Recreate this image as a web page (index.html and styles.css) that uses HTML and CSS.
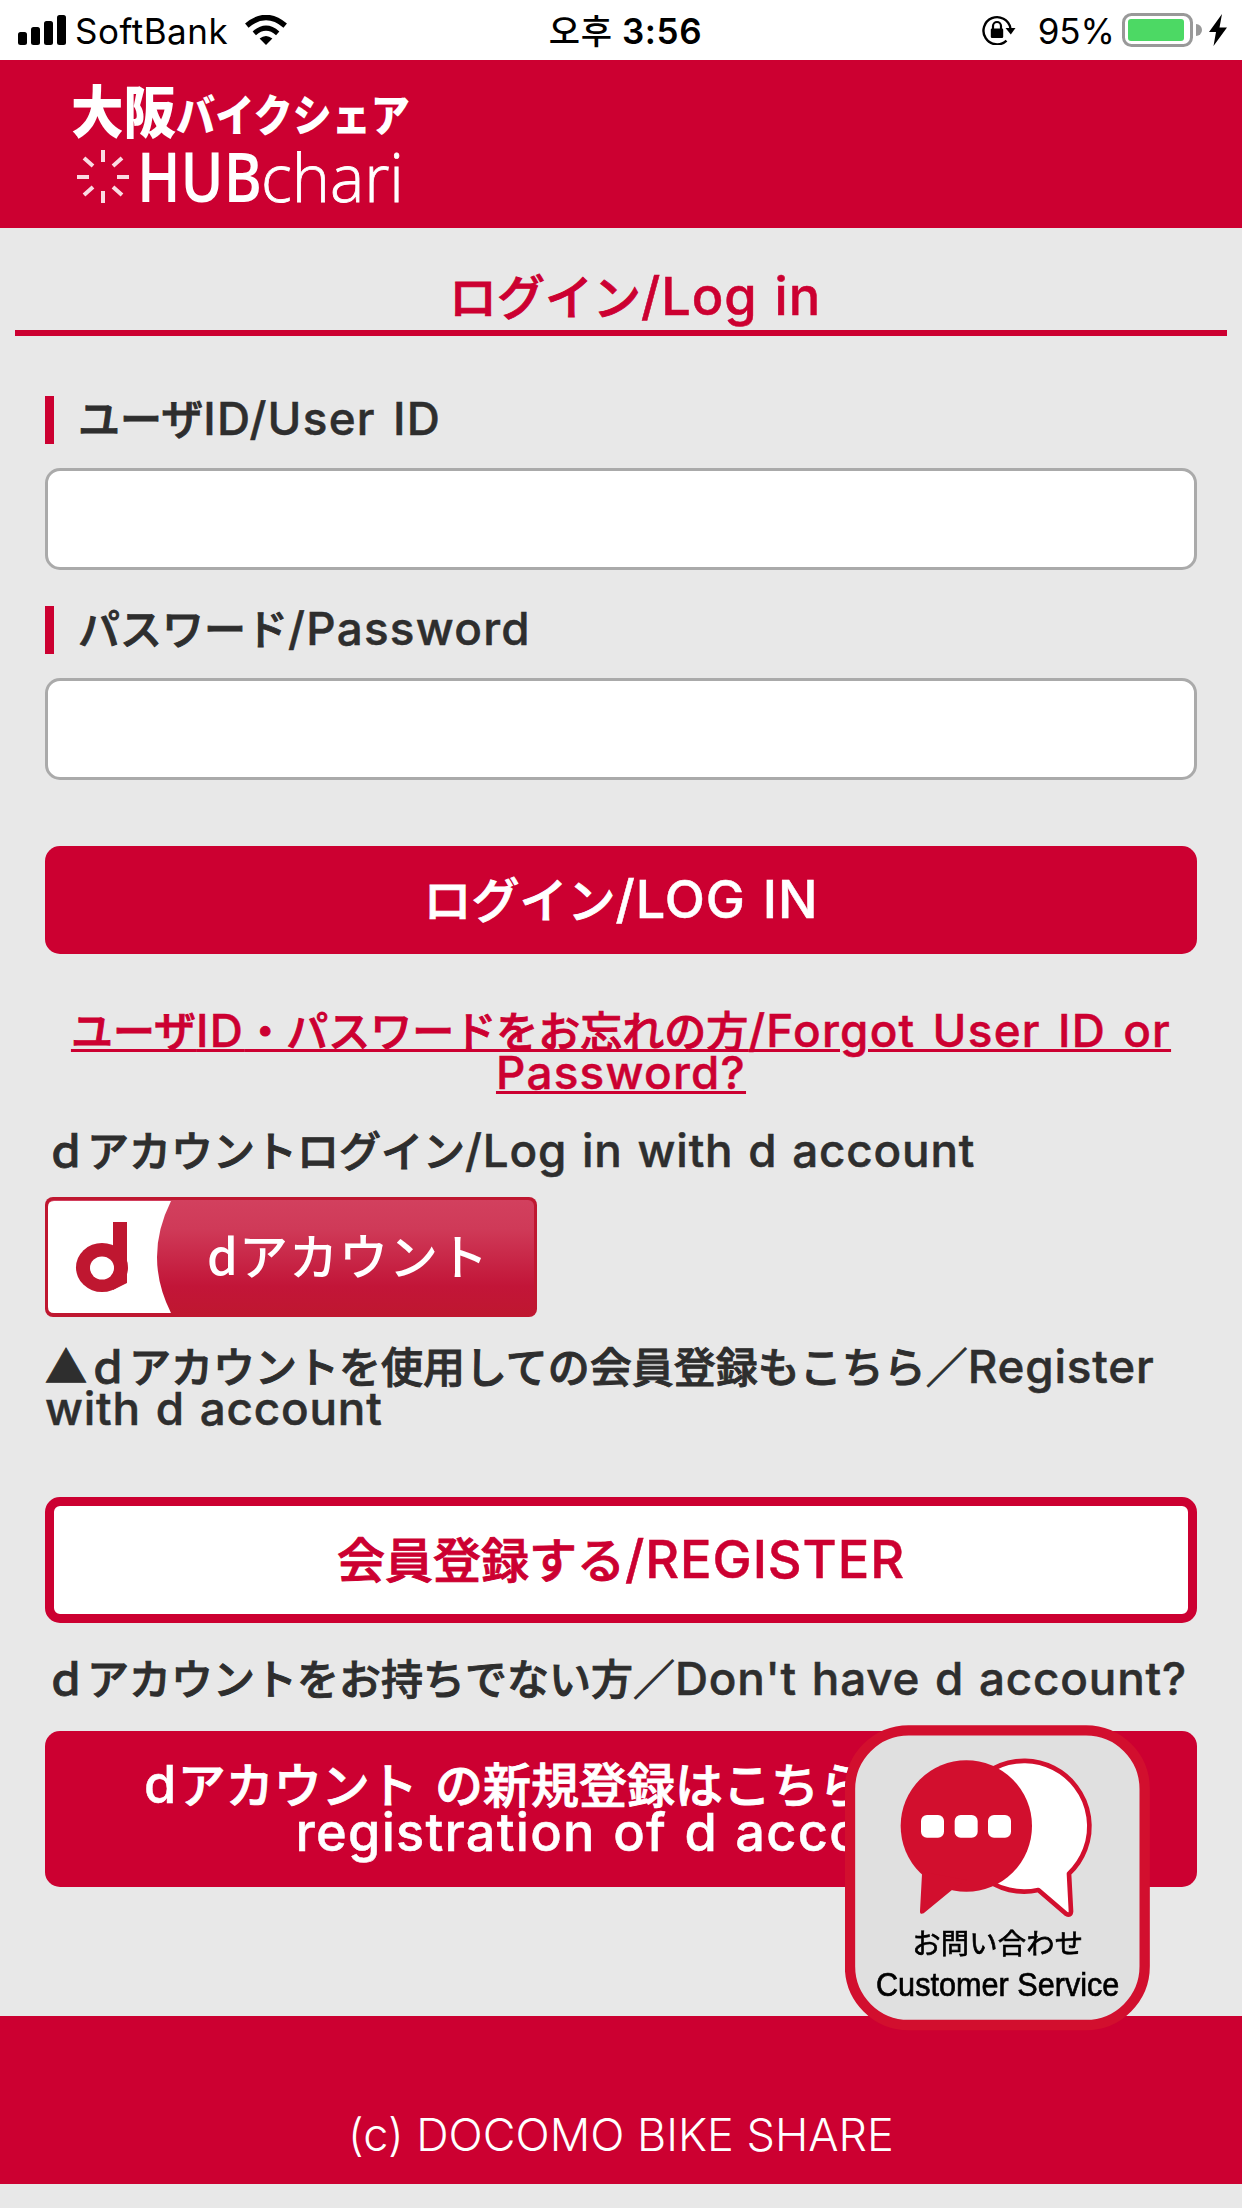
FILE: index.html
```
<!DOCTYPE html>
<html lang="ja">
<head>
    <meta charset="UTF-8">
    <title>ログイン/Log in</title>
    <link rel="stylesheet" href="styles.css">
</head>
<body>
    <div class="status-bar">
        <div class="status-left">
            <svg class="signal" width="48" height="30" viewBox="0 0 48 30">
                <rect x="0" y="17" width="9" height="13" rx="2.5"/>
                <rect x="13" y="12" width="9" height="18" rx="2.5"/>
                <rect x="26" y="6" width="9" height="24" rx="2.5"/>
                <rect x="39" y="0" width="9" height="30" rx="2.5"/>
            </svg>
            <span class="carrier">SoftBank</span>
            <svg class="wifi" width="42" height="30" viewBox="0 0 42 30">
                <path d="M21 30 L14.6 23.6 Q21 18.4 27.4 23.6 Z"/>
                <path d="M9.3 18.3 Q21 8 32.7 18.3" fill="none" stroke="#000" stroke-width="5"/>
                <path d="M1.8 10.6 Q21 -5.6 40.2 10.6" fill="none" stroke="#000" stroke-width="5.4"/>
            </svg>
        </div>
        <div class="status-time"><span class="ko">오후</span> 3:56</div>
        <div class="status-right">
            <svg class="lock" width="34" height="30" viewBox="0 0 34 30">
                <path d="M24.5 25.6 A13.6 13.6 0 1 1 28.4 13" fill="none" stroke="#000" stroke-width="2.4"/>
                <path d="M23.5 13 H33.5 L28.8 19.5 Z"/>
                <rect x="8.8" y="13.5" width="12.4" height="9.5" rx="1.2"/>
                <path d="M11 14 V11 A4 4 0 0 1 19 11 V14" fill="none" stroke="#000" stroke-width="2.2"/>
            </svg>
            <span class="percent">95%</span>
            <svg class="battery" width="106" height="34" viewBox="0 0 106 34">
                <rect x="1.5" y="1.5" width="68" height="31" rx="8" fill="#fff" stroke="#999" stroke-width="3"/>
                <rect x="6" y="6" width="56" height="22" rx="3" fill="#4cd964"/>
                <path d="M74 11 A6 6 0 0 1 74 23 Z" fill="#999"/>
                <path d="M100 1 L87 19 H94 L91.5 33 L105 14.5 H97.5 Z"/>
            </svg>
        </div>
    </div>

    <header class="header">
        <svg class="logo" width="350" height="168" viewBox="0 0 350 168">
            <g fill="#fff">
                <text class="logo-ja" x="1" y="73" font-size="57" textLength="105" lengthAdjust="spacingAndGlyphs">大阪</text>
                <text class="logo-ja" x="106" y="72" font-size="44" textLength="234" lengthAdjust="spacingAndGlyphs">バイクシェア</text>
                <text class="logo-hub" x="67" y="142" font-size="68" textLength="125" lengthAdjust="spacingAndGlyphs">HUB</text>
                <text class="logo-chari" x="191" y="142" font-size="67" textLength="143" lengthAdjust="spacingAndGlyphs">chari</text>
            </g>
            <path d="M33 90 V102 M33 131 V143 M7 117 H19 M47 117 H59 M14 98 L23 106 M52 98 L43 106 M14 135 L23 127 M52 135 L43 127" stroke="#fadbe2" stroke-width="4"/>
        </svg>
    </header>

    <main class="main">
        <h1 class="title">ログイン<span class="en">/Log in</span></h1>
        <form class="login-form">
            <label class="label" for="user-id">ユーザ<span class="en">ID/User ID</span></label>
            <input class="field" id="user-id" type="text">
            <label class="label" for="password">パスワード<span class="en">/Password</span></label>
            <input class="field" id="password" type="password">
            <button class="btn" type="button">ログイン<span class="en">/LOG IN</span></button>

            <a class="forgot" href="#">ユーザ<span class="en">ID</span>・パスワードをお忘れの方<span class="en">/Forgot User ID or<br>Password?</span></a>

            <p class="text d-login">ｄアカウントログイン<span class="en">/Log in with d account</span></p>
            <!-- d account button -->
            <svg class="d-button" width="492" height="120" viewBox="0 0 492 120">
                <defs>
                    <linearGradient id="red" x1="0" y1="0" x2="0" y2="1">
                        <stop offset="0" stop-color="#d2405e"/>
                        <stop offset="0.25" stop-color="#cf3a58"/>
                        <stop offset="0.75" stop-color="#c21538"/>
                        <stop offset="1" stop-color="#bf1730"/>
                    </linearGradient>
                </defs>
                <rect width="492" height="120" rx="8" fill="#bf1730"/>
                <rect x="3" y="3" width="486" height="115" rx="6" fill="url(#red)"/>
                <path d="M9 4 H126 Q98 60 126 116 H9 Q3 116 3 110 V10 Q3 4 9 4 Z" fill="#fff"/>
                <ellipse cx="57" cy="70.5" rx="26" ry="24.5" fill="#bf1730"/>
                <path d="M68 25 H82 V86 L68 93 Z" fill="#bf1730"/>
                <ellipse cx="57" cy="71" rx="12" ry="11.5" fill="#fff"/>
                <text class="d-text" x="162" y="78" font-size="49" fill="#fff" textLength="281">dアカウント</text>
            </svg>
            <p class="text d-register">▲ｄアカウントを使用しての会員登録もこちら／<span class="en">Register<br>with d account</span></p>

            <button class="btn btn-outline" type="button">会員登録する<span class="en">/REGISTER</span></button>
            <p class="text d-none">ｄアカウントをお持ちでない方／<span class="en">Don't have d account?</span></p>
            <button class="btn btn-new" type="button"><span class="en">d</span>アカウント<span class="en"> </span>の新規登録はこちら<span class="en">/For new<br>registration of d account</span></button>
        </form>
    </main>

    <footer class="footer"><span class="copy">(c) DOCOMO BIKE SHARE</span></footer>

    <!-- Floating contact button -->
    <a class="contact" href="#">
        <svg width="305" height="306" viewBox="75 75 915 918">
            <rect x="90" y="91" width="884" height="884" rx="176" fill="#e0e0e0" stroke="#d20f2e" stroke-width="31"/>
            <path d="M747 521 A196 196 0 1 0 655 570 L738 641 Q752 649 753 634 Z" fill="#fff" stroke="#d20f2e" stroke-width="14" stroke-linejoin="round"/>
            <circle cx="439" cy="378" r="197" fill="#d20f2e"/>
            <path d="M306 515 V522 L300 633 Q299 645 311 640 L393 572 L439 540 Z" fill="#d20f2e"/>
            <g fill="#fff">
                <rect x="303" y="345" width="69" height="68" rx="18"/>
                <rect x="404" y="345" width="69" height="68" rx="18"/>
                <rect x="504" y="345" width="69" height="68" rx="18"/>
            </g>
            <text class="contact-ja" x="277" y="763" font-size="85" textLength="512">お問い合わせ</text>
            <text class="contact-en" x="168" y="887" font-size="98" textLength="730" lengthAdjust="spacingAndGlyphs">Customer Service</text>
        </svg>
    </a>
</body>
</html>
```
FILE: styles.css
```
* {
    box-sizing: border-box;
}
body {
    margin: 0;
    height: 2208px;
    background-color: #e8e8e8;
    color: #2e2e2e;
    font-family: "Noto Sans CJK JP", sans-serif;
    font-size: 42px;
    font-weight: 500;
    line-height: 42px;
    overflow: hidden;
}
.main {
    -webkit-text-stroke: 0.9px;
}
.en {
    font-family: Inter, "Liberation Sans", sans-serif;
    font-size: 1.09em;
    letter-spacing: 0.018em;
    word-spacing: 0.04em;
    line-height: 0;
    -webkit-text-stroke: 0.5px;
}

/* Status bar */
.status-bar {
    display: grid;
    grid-template-columns: 1fr auto 1fr;
    align-items: center;
    height: 60px;
    padding: 0 14px 0 18px;
    background-color: #fff;
    color: #000;
    font-family: Inter, sans-serif;
    font-size: 35px;
    font-weight: 400;
}
.status-left, .status-right {
    display: flex;
    align-items: center;
}
.status-right {
    justify-content: flex-end;
}
.carrier {
    margin: 2px 17px 0 9px;
    letter-spacing: 0.5px;
}
.status-time {
    margin: 2px 0 0 5px;
    font-weight: 600;
    letter-spacing: 0.6px;
}
.ko {
    font-family: "Noto Sans CJK KR", sans-serif;
    font-size: 34px;
    font-weight: 500;
    line-height: 0;
}
.percent {
    margin: 2px 7px 0 22px;
}

/* Header */
.header {
    height: 168px;
    padding-left: 70px;
    background-color: #cc0031;
}
.logo {
    display: block;
}
.logo-ja {
    font-family: "Noto Sans CJK JP", sans-serif;
    font-weight: 900;
}
.logo-hub, .logo-chari {
    font-family: "Open Sans", sans-serif;
    font-weight: 600;
}
.logo-chari {
    font-weight: 300;
    stroke: #fff;
    stroke-width: 0.8;
}

/* Login */
.title {
    height: 108px;
    margin: 0 15px;
    padding: 42px 0 0 28px;
    border-bottom: 6px solid #cc0031;
    color: #cc0031;
    font-size: 48px;
    font-weight: 500;
    line-height: 48px;
    text-align: center;
}
.login-form {
    display: flex;
    flex-direction: column;
    padding: 60px 45px 0;
}
.label {
    height: 48px;
    padding-left: 24px;
    border-left: 9px solid #cc0031;
    line-height: 42px;
}
.label .en, .forgot .en {
    letter-spacing: 0.028em;
    word-spacing: 0.08em;
}
.field {
    height: 102px;
    margin: 24px 0 36px;
    border: 3px solid #aaa;
    border-radius: 15px;
    background-color: #fff;
}
.btn {
    height: 108px;
    margin: 30px 0 0;
    padding: 0 0 6px;
    border: none;
    border-radius: 15px;
    background-color: #cc0031;
    color: #fff;
    font-family: inherit;
    font-size: 48px;
    font-weight: 500;
    line-height: 48px;
}
.forgot {
    margin-top: 54px;
    color: #cc0031;
    text-align: center;
    text-decoration: underline;
    text-decoration-thickness: 3px;
}
.text {
    margin: 0;
    white-space: nowrap;
}
.d-login {
    margin-top: 36px;
}
.d-button {
    margin-top: 27px;
}
.d-text {
    font-family: "Noto Sans CJK JP", sans-serif;
    font-weight: 500;
}
.d-register {
    margin-top: 27px;
}
.btn-outline {
    height: 126px;
    margin-top: 69px;
    border: 9px solid #cc0031;
    background-color: #fff;
    color: #cc0031;
}
.d-none {
    margin-top: 33px;
}
.btn-new {
    height: 156px;
    margin-top: 33px;
}
.btn-new .en {
    letter-spacing: 0.024em;
}

/* Footer */
.footer {
    height: 168px;
    margin-top: 129px;
    padding-top: 98px;
    background-color: #cc0031;
    color: #fff;
    font-family: Inter, sans-serif;
    font-size: 45px;
    font-weight: 300;
    text-align: center;
}

/* Contact button stays over the page */
.contact {
    position: fixed;
    top: 1725px;
    left: 845px;
}
.contact svg {
    display: block;
}
.contact-ja {
    font-family: "Noto Sans CJK JP", sans-serif;
    font-weight: 400;
    stroke: #000;
    stroke-width: 2;
}
.contact-en {
    font-family: "Liberation Sans", sans-serif;
    stroke: #000;
    stroke-width: 2;
}
```
